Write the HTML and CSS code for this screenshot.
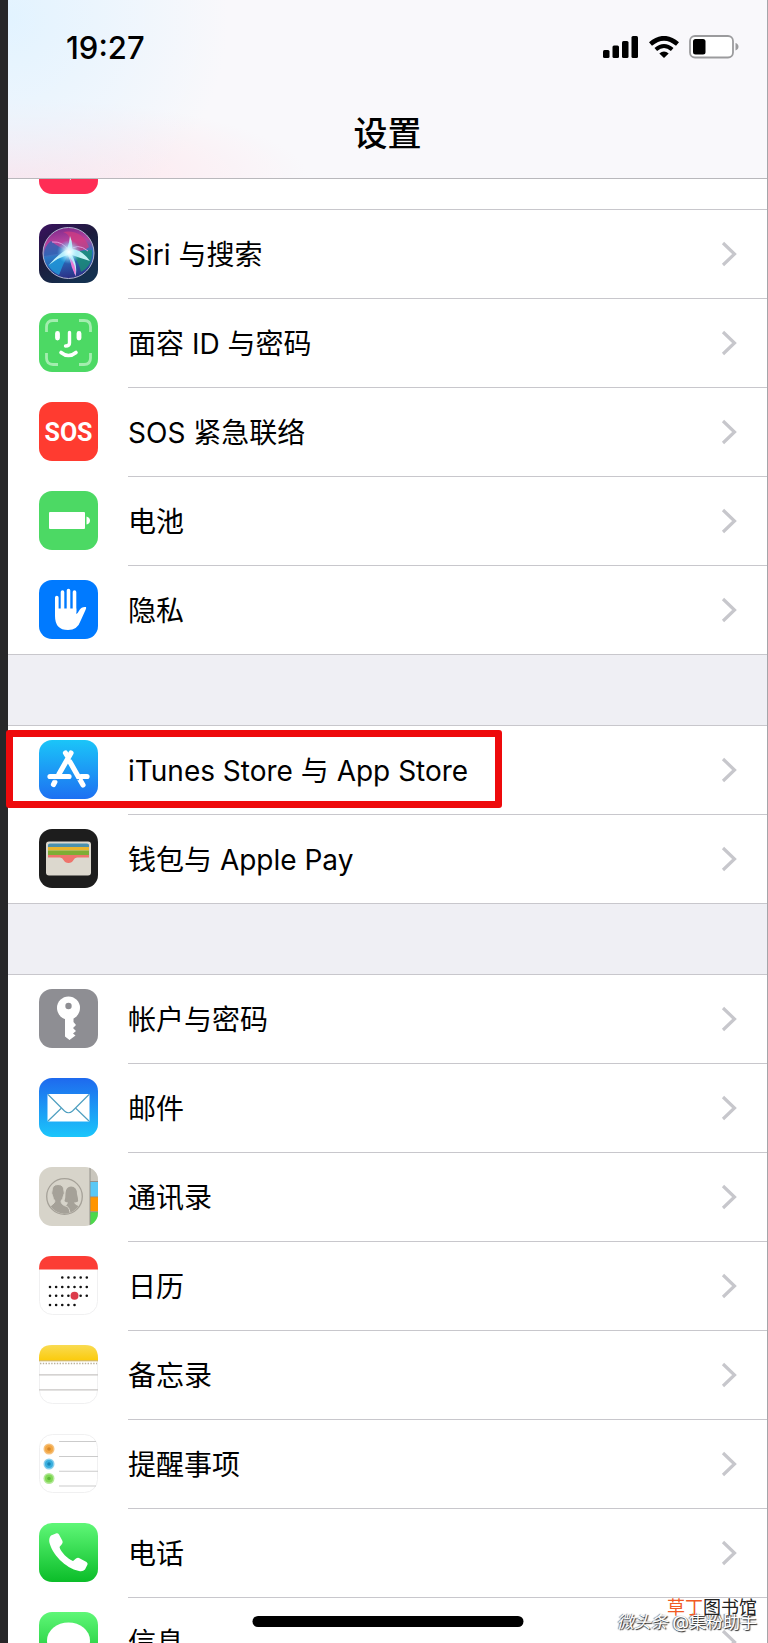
FILE: index.html
```html
<!DOCTYPE html>
<html lang="zh-CN">
  <head>
    <meta charset="UTF-8" />
    <meta name="viewport" content="width=device-width, initial-scale=1.0" />
    <title>设置</title>
    <link rel="stylesheet" href="styles.css">
  </head>
  <body>
    <!-- shared chevron -->
    <svg class="defs" width="0" height="0" aria-hidden="true">
      <symbol id="chevron" viewBox="0 0 16 26">
        <path d="M2 2 L13.500 13 L2 24" fill="none" stroke="#c7c7cc" stroke-width="3.200" />
      </symbol>
    </svg>

    <div class="screen">
      <header class="header">
        <div class="status-bar">
          <span class="time">19:27</span>
          <div class="status-icons">
            <svg width="36" height="22" viewBox="0 0 36 22" aria-hidden="true">
              <rect x="0" y="14" width="6.500" height="8" rx="1.500" />
              <rect x="9.500" y="9.500" width="6.500" height="12.500" rx="1.500" />
              <rect x="19" y="5" width="6.500" height="17" rx="1.500" />
              <rect x="28.500" y="0" width="6.500" height="22" rx="1.500" />
            </svg>
            <svg width="30" height="22" viewBox="0 0 30 22" aria-hidden="true">
              <path d="M1.500 8 Q15 -3.500 28.500 8" fill="none" stroke="#000" stroke-width="4.600" />
              <path d="M6.800 13.500 Q15 6.500 23.200 13.500" fill="none" stroke="#000" stroke-width="4" />
              <path d="M10.300 17.500 Q15 13.500 19.700 17.500 L15 22 Z" />
            </svg>
            <svg width="50" height="24" viewBox="0 0 50 24" aria-hidden="true">
              <rect x="1" y="1" width="43" height="21.500" rx="5" fill="#fff" stroke="#9b9b9d" stroke-width="1.800" />
              <rect x="4" y="4" width="12.500" height="15.500" rx="2.500" />
              <path d="M46.500 8 Q49.500 9 49.500 11.800 Q49.500 14.500 46.500 15.500 Z" fill="#9b9b9d" />
            </svg>
          </div>
        </div>
        <h1 class="title">设置</h1>
      </header>

      <main class="settings">
        <ul class="group group-scrolled">
          <li>
            <a class="row" href="#">
              <svg class="icon" viewBox="0 0 59 59" aria-hidden="true">
                <rect width="59" height="59" rx="13" fill="#ff2d55" />
                <path d="M12 24 H20 L32 14 V45 L20 36 H12 Z M38 22 Q43 30 38 38 M43 17 Q51 30 42 44" fill="#fff" />
              </svg>
              <span class="label">声音与触感</span>
              <svg class="chevron" aria-hidden="true"><use href="#chevron" /></svg>
            </a>
          </li>
          <li>
            <a class="row" href="#">
              <svg class="icon" viewBox="0 0 59 59" aria-hidden="true">
                <defs>
                  <linearGradient id="siri-bg" x1="0" y1="0" x2="0.600" y2="1">
                    <stop offset="0" stop-color="#3b1260" />
                    <stop offset="0.500" stop-color="#1c1b3c" />
                    <stop offset="1" stop-color="#14304f" />
                  </linearGradient>
                  <linearGradient id="siri-orb" x1="0.300" y1="0" x2="0.450" y2="1">
                    <stop offset="0" stop-color="#7d2a8c" />
                    <stop offset="0.300" stop-color="#b8449f" />
                    <stop offset="0.550" stop-color="#2a78c4" />
                    <stop offset="1" stop-color="#2b2f86" />
                  </linearGradient>
                  <radialGradient id="siri-glow">
                    <stop offset="0" stop-color="#fff" />
                    <stop offset="0.350" stop-color="#d2f8ff" stop-opacity="0.850" />
                    <stop offset="1" stop-color="#5fd2ff" stop-opacity="0" />
                  </radialGradient>
                </defs>
                <rect width="59" height="59" rx="13" fill="url(#siri-bg)" />
                <circle cx="29.500" cy="29" r="25.500" fill="url(#siri-orb)" />
                <path d="M31 27 Q34 11 24 8 Q43 5 50 23 Q45 28 31 27 Z" fill="#d13c80" opacity="0.750" />
                <path d="M31 28 L53 26 Q54 42 42 48 Q40 37 31 28 Z" fill="#1a8f74" opacity="0.800" />
                <path d="M29 28 L5 32 Q5 22 12 17 Q18 22 29 28 Z" fill="#2f62b3" opacity="0.800" />
                <path d="M30 29 Q17 33 9 41 Q13 48 20 51 Q24 40 30 29 Z" fill="#1f9bdc" opacity="0.800" />
                <path d="M10 41 Q19 30 28 25.500 Q30.500 18 31 12 Q34 19 33 25 Q43 26 51 37 Q41 34 33 31 Q39 42 36.500 52 Q33 40 29 31 Q20 33 10 41 Z" fill="#c9f7fb" opacity="0.950" />
                <path d="M30 32 Q38 42 36.500 52 Q32 43 30 32 Z" fill="#ed78d6" />
                <path d="M13 18 Q24 17 30 27 Q38 18 49 27" fill="none" stroke="#e29add" stroke-width="1" />
                <circle cx="30" cy="28" r="12" fill="url(#siri-glow)" />
                <circle cx="29.500" cy="29" r="25.500" fill="none" stroke="#b3b5d0" stroke-width="1" />
              </svg>
              <span class="label">Siri 与搜索</span>
              <svg class="chevron" aria-hidden="true"><use href="#chevron" /></svg>
            </a>
          </li>
          <li>
            <a class="row" href="#">
              <svg class="icon" viewBox="0 0 59 59" aria-hidden="true">
                <rect width="59" height="59" rx="13" fill="#4cd964" />
                <path d="M7.500 19 V14 Q7.500 7.500 14 7.500 H19 M40 7.500 H45 Q51.500 7.500 51.500 14 V19 M51.500 40 V45 Q51.500 51.500 45 51.500 H40 M19 51.500 H14 Q7.500 51.500 7.500 45 V40" fill="none" stroke="#a3edaf" stroke-width="2.800" />
                <path d="M18.500 20.500 V25 M40 20.500 V25" stroke="#fff" stroke-width="4.800" stroke-linecap="round" />
                <path d="M30.500 19.500 V30 Q30.500 33 26.500 33" fill="none" stroke="#fff" stroke-width="3.400" stroke-linecap="round" />
                <path d="M22 39.500 Q29.500 45.500 37 39.500" fill="none" stroke="#fff" stroke-width="3.600" stroke-linecap="round" />
              </svg>
              <span class="label">面容 ID 与密码</span>
              <svg class="chevron" aria-hidden="true"><use href="#chevron" /></svg>
            </a>
          </li>
          <li>
            <a class="row" href="#">
              <svg class="icon" viewBox="0 0 59 59" aria-hidden="true">
                <rect width="59" height="59" rx="13" fill="#ff3b30" />
                <text class="sos" x="29.500" y="39" text-anchor="middle">SOS</text>
              </svg>
              <span class="label">SOS 紧急联络</span>
              <svg class="chevron" aria-hidden="true"><use href="#chevron" /></svg>
            </a>
          </li>
          <li>
            <a class="row" href="#">
              <svg class="icon" viewBox="0 0 59 59" aria-hidden="true">
                <rect width="59" height="59" rx="13" fill="#4cd964" />
                <rect x="10" y="21" width="36" height="17" rx="1" fill="#fff" />
                <path d="M47.500 25.500 Q51 26.500 51 29.500 Q51 32.500 47.500 33.500 Z" fill="#fff" />
              </svg>
              <span class="label">电池</span>
              <svg class="chevron" aria-hidden="true"><use href="#chevron" /></svg>
            </a>
          </li>
          <li>
            <a class="row" href="#">
              <svg class="icon" viewBox="0 0 59 59" aria-hidden="true">
                <rect width="59" height="59" rx="13" fill="#007aff" />
                <path d="M17.800 17.500 V32 M23.500 12 V32 M29.500 10.500 V32 M35.500 12 V32" stroke="#fff" stroke-width="3.600" stroke-linecap="round" />
                <path d="M16 28.500 H37.300 V34 Q39 33 40.500 30 Q42.500 26.500 47 27 Q47.500 28 46.500 30 L41.500 41 Q38.500 50 29 50 Q16 50 16 36 Z" fill="#fff" />
              </svg>
              <span class="label">隐私</span>
              <svg class="chevron" aria-hidden="true"><use href="#chevron" /></svg>
            </a>
          </li>
        </ul>

        <ul class="group">
          <li class="highlighted">
            <a class="row" href="#">
              <svg class="icon" viewBox="0 0 59 59" aria-hidden="true">
                <defs>
                  <linearGradient id="store-bg" x1="0" y1="0" x2="0" y2="1">
                    <stop offset="0" stop-color="#1bc5f8" />
                    <stop offset="1" stop-color="#1d70f2" />
                  </linearGradient>
                </defs>
                <rect width="59" height="59" rx="13" fill="url(#store-bg)" />
                <g fill="none" stroke="#fff" stroke-width="5.200" stroke-linecap="round">
                  <path d="M32 13 L20 34" />
                  <path d="M15.800 42 L14.500 44.500" />
                  <path d="M11 36.500 H30" />
                  <path d="M42 36.500 H48" />
                  <path d="M26.500 13 L28 15.500 M31 22 L44 45" />
                </g>
                <path d="M14 39.700 H40" stroke="#1e8df5" stroke-width="1" />
              </svg>
              <span class="label">iTunes Store 与 App Store</span>
              <svg class="chevron" aria-hidden="true"><use href="#chevron" /></svg>
            </a>
          </li>
          <li>
            <a class="row" href="#">
              <svg class="icon" viewBox="0 0 59 59" aria-hidden="true">
                <rect width="59" height="59" rx="13" fill="#1d1d1d" />
                <rect x="7" y="12.500" width="45" height="34" rx="3" fill="#dcd8ce" />
                <path d="M9 18 V16 Q9 14.500 11 14.500 H48 Q50 14.500 50 16 V18 Z" fill="#4b91ad" />
                <rect x="9" y="18" width="41" height="3.500" fill="#e9b52c" />
                <rect x="9" y="21.500" width="41" height="4.500" fill="#7ead35" />
                <path d="M9 26 H50 V28.500 H38 Q35.500 28.500 34.500 31 Q33 34 29.500 34 Q26 34 24.500 31 Q23.500 28.500 21 28.500 H9 Z" fill="#ee746c" />
              </svg>
              <span class="label">钱包与 Apple Pay</span>
              <svg class="chevron" aria-hidden="true"><use href="#chevron" /></svg>
            </a>
          </li>
        </ul>

        <ul class="group">
          <li>
            <a class="row" href="#">
              <svg class="icon" viewBox="0 0 59 59" aria-hidden="true">
                <rect width="59" height="59" rx="13" fill="#8e8e93" />
                <circle cx="29.500" cy="19" r="11.500" fill="#fff" />
                <circle cx="29.500" cy="17" r="3.200" fill="#8e8e93" />
                <path d="M26 29 H34.500 V33 L37 36 L34 39 L37 42 L34 44.500 L36.500 46.500 L30.500 51 L26 47.500 Z" fill="#fff" />
              </svg>
              <span class="label">帐户与密码</span>
              <svg class="chevron" aria-hidden="true"><use href="#chevron" /></svg>
            </a>
          </li>
          <li>
            <a class="row" href="#">
              <svg class="icon" viewBox="0 0 59 59" aria-hidden="true">
                <defs>
                  <linearGradient id="mail-bg" x1="0" y1="0" x2="0" y2="1">
                    <stop offset="0" stop-color="#1e69ee" />
                    <stop offset="1" stop-color="#1bc6fb" />
                  </linearGradient>
                </defs>
                <rect width="59" height="59" rx="13" fill="url(#mail-bg)" />
                <rect x="8.500" y="16" width="42" height="27.500" rx="1" fill="#fff" />
                <path d="M9 16.500 L25.500 33 Q29.500 36.500 33.500 33 L50 16.500 M9 43 L22 30.500 M50 43 L37 30.500" fill="none" stroke="#4f9fc0" stroke-width="1.200" />
              </svg>
              <span class="label">邮件</span>
              <svg class="chevron" aria-hidden="true"><use href="#chevron" /></svg>
            </a>
          </li>
          <li>
            <a class="row" href="#">
              <svg class="icon" viewBox="0 0 59 59" aria-hidden="true">
                <clipPath id="contacts-clip"><rect width="59" height="59" rx="13" /></clipPath>
                <clipPath id="people-clip"><circle cx="25.500" cy="29.500" r="17" /></clipPath>
                <g clip-path="url(#contacts-clip)">
                  <rect width="59" height="59" fill="#d7d4ca" />
                  <rect x="51" y="0" width="8" height="14.500" fill="#c9c6bd" />
                  <rect x="51" y="15" width="8" height="14.500" fill="#5ac8f5" />
                  <rect x="51" y="30" width="8" height="14.500" fill="#ff9500" />
                  <rect x="51" y="45" width="8" height="14" fill="#4cd94c" />
                  <path d="M51 0 V59 M51 14.500 H59 M51 29.800 H59 M51 44.800 H59" stroke="#8c8a83" stroke-width="0.900" />
                </g>
                <g clip-path="url(#people-clip)" fill="#a5a198">
                  <path d="M32 19.500 Q38 19.500 38 27 Q39.500 33 39 34.500 Q37 35.500 35 35.500 Q36 38 42 40 V48 H24 V40 Q28 39 29 35.500 Q26 35 25.500 34 Q26.500 31 26.500 26 Q27 19.500 32 19.500 Z" />
                  <path d="M19 17.500 Q25 17.500 25 24 Q26 26 24.500 28.500 Q24 32 22 34 Q22 38 28 39.500 Q31 41 31 48 H7 V41 Q15 38 16 34 Q14 32 13.500 28.500 Q12 26 13 24 Q13 17.500 19 17.500 Z" stroke="#d7d4ca" stroke-width="1" />
                </g>
                <circle cx="25.500" cy="29.500" r="17.800" fill="none" stroke="#a5a198" stroke-width="1.300" />
              </svg>
              <span class="label">通讯录</span>
              <svg class="chevron" aria-hidden="true"><use href="#chevron" /></svg>
            </a>
          </li>
          <li>
            <a class="row" href="#">
              <svg class="icon" viewBox="0 0 59 59" aria-hidden="true">
                <rect x="0.500" y="0.500" width="58" height="58" rx="13" fill="#fff" stroke="#f0f0f1" />
                <path d="M0 13.500 Q0 0 13 0 H46 Q59 0 59 13.500 Z" fill="#fc3d35" />
                <g fill="none" stroke="#111" stroke-width="2.600" stroke-linecap="round" stroke-dasharray="0 6.130">
                  <path d="M23.300 21.500 H48" />
                  <path d="M11 31 H48" />
                  <path d="M11 39.700 H48" />
                  <path d="M11 49 H36" />
                </g>
                <circle cx="35.500" cy="39.700" r="4" fill="#dc3b4a" />
              </svg>
              <span class="label">日历</span>
              <svg class="chevron" aria-hidden="true"><use href="#chevron" /></svg>
            </a>
          </li>
          <li>
            <a class="row" href="#">
              <svg class="icon" viewBox="0 0 59 59" aria-hidden="true">
                <defs>
                  <linearGradient id="notes-bg" x1="0" y1="0" x2="0" y2="1">
                    <stop offset="0" stop-color="#f9db52" />
                    <stop offset="1" stop-color="#fbcb0c" />
                  </linearGradient>
                </defs>
                <rect x="0.500" y="0.500" width="58" height="58" rx="13" fill="#fff" stroke="#f0f0f1" />
                <path d="M0 15.500 V13 Q0 0 13 0 H46 Q59 0 59 13 V15.500 Z" fill="url(#notes-bg)" />
                <path d="M0 15.800 H59" stroke="#c9ac4a" stroke-width="1" />
                <path d="M1 18.500 H58" stroke="#b9b19c" stroke-width="1.400" stroke-dasharray="1.400 1.400" />
                <path d="M0 29.800 H59 M0 44.800 H59" stroke="#c8c5c3" stroke-width="1.200" />
              </svg>
              <span class="label">备忘录</span>
              <svg class="chevron" aria-hidden="true"><use href="#chevron" /></svg>
            </a>
          </li>
          <li>
            <a class="row" href="#">
              <svg class="icon" viewBox="0 0 59 59" aria-hidden="true">
                <rect x="0.500" y="0.500" width="58" height="58" rx="13" fill="#fff" stroke="#f0f0f1" />
                <path d="M20 7.500 H57 M20 22.500 H59 M20 37.300 H59 M20 52 H57" stroke="#cbcbcb" stroke-width="1.100" />
                <g fill="#f2a745"><circle cx="10" cy="15" r="5.500" opacity="0.700" /><circle cx="10" cy="15" r="4" /></g>
                <g fill="#38aede"><circle cx="10" cy="30" r="5.500" opacity="0.600" /><circle cx="10" cy="30" r="4" /></g>
                <g fill="#82d957"><circle cx="10" cy="44.500" r="5.500" opacity="0.600" /><circle cx="10" cy="44.500" r="4" /></g>
                <circle cx="10" cy="15" r="1.800" fill="#d58528" />
                <circle cx="10" cy="30" r="1.800" fill="#1684b5" />
                <circle cx="10" cy="44.500" r="1.800" fill="#5cb838" />
              </svg>
              <span class="label">提醒事项</span>
              <svg class="chevron" aria-hidden="true"><use href="#chevron" /></svg>
            </a>
          </li>
          <li>
            <a class="row" href="#">
              <svg class="icon" viewBox="0 0 59 59" aria-hidden="true">
                <defs>
                  <linearGradient id="green-bg" x1="0" y1="0" x2="0" y2="1">
                    <stop offset="0" stop-color="#5ff777" />
                    <stop offset="1" stop-color="#0bbd29" />
                  </linearGradient>
                </defs>
                <rect width="59" height="59" rx="13" fill="url(#green-bg)" />
                <path d="M12 12.500 L17.500 10.300 Q19 10 20 11.500 L23.500 18 Q24 19.500 23 21 L20.500 24 C21.500 29 29 36 34 38 L37 35.500 Q38.500 34.500 40 35 L47.500 39 Q49 40 48.500 41.500 L46 46.500 Q44 48.800 40 48 C26 45 13 31 10.300 19 Q9.800 14.500 12 12.500 Z" fill="#fff" />
              </svg>
              <span class="label">电话</span>
              <svg class="chevron" aria-hidden="true"><use href="#chevron" /></svg>
            </a>
          </li>
          <li>
            <a class="row" href="#">
              <svg class="icon" viewBox="0 0 59 59" aria-hidden="true">
                <rect width="59" height="59" rx="13" fill="url(#green-bg)" />
                <ellipse cx="29.500" cy="28.500" rx="21.500" ry="18" fill="#fff" />
                <path d="M16 42 Q16 47 11 50 Q19 50 23 45 Z" fill="#fff" />
              </svg>
              <span class="label">信息</span>
              <svg class="chevron" aria-hidden="true"><use href="#chevron" /></svg>
            </a>
          </li>
        </ul>
      </main>

      <div class="home-indicator"></div>
      <div class="credits">
        <span class="site"><span class="site-accent">草丁</span>图书馆</span>
        <span class="author"><em>微头条</em> @集粉助手</span>
      </div>
    </div>
  </body>
</html>
```

FILE: styles.css
```css
* {
  box-sizing: border-box;
}
body {
  margin: 0;
  background: #272729;
  color: #000;
  font-family: Inter, "Noto Sans CJK SC", sans-serif;
}
.defs {
  position: absolute;
}
.screen {
  position: relative;
  display: flex;
  flex-direction: column;
  height: 100vh;
  margin-left: 8px;
  border-right: 1px solid #a5a5a9;
  background: #efeff4;
  overflow-x: visible;
  overflow-y: clip;
}

/* header */
.header {
  position: relative;
  z-index: 1;
  flex: none;
  padding: 28px 28px 20px 58px;
  border-bottom: 1px solid #b9b8bc;
  background:
    radial-gradient(circle at 0 10%, #e2f3ff 0, rgba(226, 243, 255, 0) 220px),
    radial-gradient(ellipse 300px 80px at 0 100%, #ffe3ea 0, rgba(255, 227, 234, 0) 100%),
    #f9f8fb;
}
.status-bar {
  display: flex;
  align-items: center;
  justify-content: space-between;
  height: 38px;
}
.time {
  font-size: 31px;
  font-weight: 500;
}
.status-icons {
  display: flex;
  align-items: center;
  gap: 10px;
}
.title {
  margin: 44px 0 0;
  padding-right: 30px;
  font-size: 34px;
  font-weight: 500;
  line-height: 48px;
  text-align: center;
}

/* list */
.settings {
  flex: 1;
  min-height: 0;
}
.group {
  margin: 0 0 70px;
  padding: 0;
  border-top: 1px solid #c8c7cc;
  background: #fff;
  list-style: none;
}
.group-scrolled {
  margin-top: -59px;
}
.group li {
  background: linear-gradient(#c8c7cc, #c8c7cc) 120px 100% / 100% 1px no-repeat;
}
.group li:last-child {
  background-position: 0 100%;
}
.row {
  display: flex;
  align-items: center;
  padding-left: 31px;
  color: inherit;
  text-decoration: none;
}
.icon {
  flex: none;
  width: 59px;
  height: 59px;
  margin: 14px 30px 16px 0;
}
.label {
  flex: 1;
  font-size: 28px;
  line-height: 40px;
}
.chevron {
  flex: none;
  width: 16px;
  height: 26px;
  margin: 0 30px 2px 0;
}
.sos {
  fill: #fff;
  font-family: "Liberation Sans Narrow", Roboto, sans-serif;
  font-size: 25px;
  font-weight: 700;
}

/* red frame around the store row */
.highlighted {
  position: relative;
}
.highlighted::after {
  content: "";
  position: absolute;
  top: 4px;
  bottom: 7px;
  left: -2px;
  width: 496px;
  box-sizing: border-box;
  border: 7px solid #ee0a0c;
  border-radius: 3px;
  pointer-events: none;
}

/* overlays */
.home-indicator {
  position: absolute;
  bottom: 16px;
  left: 50%;
  width: 271px;
  height: 11px;
  border-radius: 6px;
  background: #000;
  transform: translateX(-50%);
}
.credits {
  position: absolute;
  right: 10px;
  bottom: 14px;
  display: grid;
  justify-items: end;
  line-height: 14px;
}
.site {
  z-index: 1;
  color: #222;
  font-size: 18px;
}
.site-accent {
  color: #f15a24;
}
.author {
  color: #fff;
  font-size: 17px;
  text-shadow: 1px 1px 1px #222, -1px 0 1px #777;
}
```
